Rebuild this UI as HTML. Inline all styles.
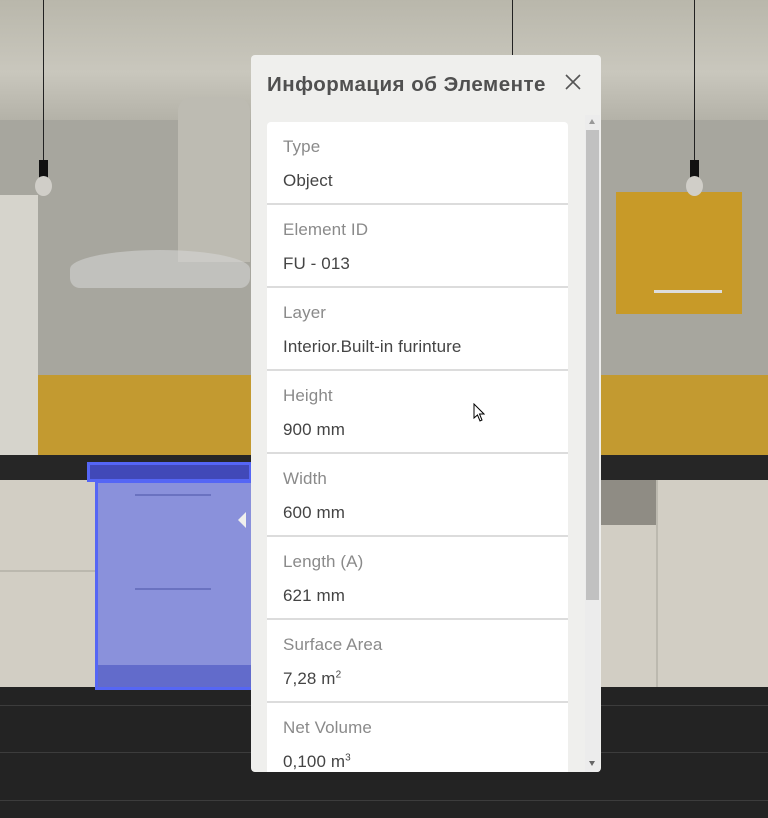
<!DOCTYPE html>
<html><head><meta charset="utf-8"><style>
*{margin:0;padding:0;box-sizing:border-box}
body{width:768px;height:818px;overflow:hidden;position:relative;font-family:"Liberation Sans",sans-serif;background:#bfbcb2}
.a{position:absolute}
.row{height:83px;border-bottom:2px solid #dcdcdc;padding-left:16px;position:relative}
.lb{position:absolute;left:16px;top:15px;font-size:17px;color:#8a8a8a;letter-spacing:0.1px}
.vl{position:absolute;left:16px;top:49px;font-size:17px;color:#444;letter-spacing:0.1px}
sup{font-size:10px}
</style></head><body>
<div class="a" style="left:0;top:0;width:768px;height:120px;background:linear-gradient(#b9b7ab,#c9c7bd 60%,#b4b2a8)"></div>
<div class="a" style="left:0;top:120px;width:768px;height:255px;background:#a7a69e"></div>
<div class="a" style="left:0;top:195px;width:38px;height:280px;background:#d6d4cc"></div>
<div class="a" style="left:38px;top:375px;width:730px;height:80px;background:#c39a30"></div>
<div class="a" style="left:0;top:455px;width:768px;height:25px;background:#262626"></div>
<div class="a" style="left:0;top:480px;width:768px;height:207px;background:#d2cec4"></div>
<div class="a" style="left:0;top:570px;width:95px;height:2px;background:#bbb8ae"></div>
<div class="a" style="left:656px;top:480px;width:2px;height:207px;background:#bcb9af"></div>
<div class="a" style="left:600px;top:480px;width:56px;height:45px;background:#8f8c84"></div>
<div class="a" style="left:0;top:687px;width:768px;height:131px;background:#232323"></div>
<div class="a" style="left:0;top:705px;width:768px;height:1px;background:#3c3c3c"></div>
<div class="a" style="left:0;top:752px;width:768px;height:1px;background:#3c3c3c"></div>
<div class="a" style="left:0;top:800px;width:768px;height:1px;background:#3c3c3c"></div>
<div class="a" style="left:178px;top:97px;width:72px;height:165px;background:#bdbbb2;border-radius:14px 14px 0 0"></div>
<div class="a" style="left:70px;top:250px;width:180px;height:38px;background:rgba(215,215,215,.55);border-radius:50% 50% 10px 10px"></div>
<div class="a" style="left:616px;top:192px;width:126px;height:122px;background:#c89a28"></div>
<div class="a" style="left:654px;top:290px;width:68px;height:3px;background:#ddd"></div>
<div class="a" style="left:43px;top:0;width:1px;height:165px;background:#222"></div>
<div class="a" style="left:39px;top:160px;width:9px;height:18px;background:#111"></div>
<div class="a" style="left:35px;top:176px;width:17px;height:20px;background:#d0cec8;border-radius:50%"></div>
<div class="a" style="left:694px;top:0;width:1px;height:165px;background:#222"></div>
<div class="a" style="left:690px;top:160px;width:9px;height:18px;background:#111"></div>
<div class="a" style="left:686px;top:176px;width:17px;height:20px;background:#d0cec8;border-radius:50%"></div>
<div class="a" style="left:512px;top:0;width:1px;height:55px;background:#222"></div>
<div class="a" style="left:87px;top:462px;width:165px;height:20px;background:rgba(70,80,210,.85);border:3px solid #5566f5"></div>
<div class="a" style="left:95px;top:480px;width:157px;height:210px;background:rgba(120,130,225,.8);border:3px solid #5566f5;border-right:none"></div>
<div class="a" style="left:98px;top:665px;width:154px;height:22px;background:rgba(90,100,200,.85)"></div>
<div class="a" style="left:135px;top:494px;width:76px;height:2px;background:#6a72c0"></div>
<div class="a" style="left:135px;top:588px;width:76px;height:2px;background:#6a72c0"></div>
<div class="a" style="top:512px;width:0;height:0;border:8px solid transparent;border-right-color:#efefed;border-left:none;left:238px"></div>
<div class="a" style="left:251px;top:55px;width:350px;height:717px;background:#efefed;border-radius:4px;overflow:hidden">
<div class="a" style="left:16px;top:18px;font-size:20.5px;font-weight:bold;color:#505050;letter-spacing:0.5px">Информация об Элементе</div>
<svg class="a" style="left:314px;top:19px" width="16" height="16" viewBox="0 0 16 16"><path d="M1 1L15 15M15 1L1 15" stroke="#555" stroke-width="1.6"/></svg>
<div class="a" style="left:16px;top:67px;width:301px;height:660px;background:#fff;border-radius:4px 4px 0 0;overflow:hidden">
<div class="row"><div class="lb">Type</div><div class="vl">Object</div></div>
<div class="row"><div class="lb">Element ID</div><div class="vl">FU - 013</div></div>
<div class="row"><div class="lb">Layer</div><div class="vl">Interior.Built-in furinture</div></div>
<div class="row"><div class="lb">Height</div><div class="vl">900 mm</div></div>
<div class="row"><div class="lb">Width</div><div class="vl">600 mm</div></div>
<div class="row"><div class="lb">Length (A)</div><div class="vl">621 mm</div></div>
<div class="row"><div class="lb">Surface Area</div><div class="vl">7,28 m<sup>2</sup></div></div>
<div class="row"><div class="lb">Net Volume</div><div class="vl">0,100 m<sup>3</sup></div></div>
</div>
<div class="a" style="left:334px;top:60px;width:15px;height:657px;background:#ececec"></div>
<div class="a" style="left:335px;top:75px;width:13px;height:470px;background:#c1c1c1"></div>
<div class="a" style="left:338px;top:64px;width:0;height:0;border:3.5px solid transparent;border-bottom:5px solid #999;border-top:none"></div>
<div class="a" style="left:338px;top:706px;width:0;height:0;border:3.5px solid transparent;border-top:5px solid #666;border-bottom:none"></div>
</div>
<svg class="a" style="left:473px;top:403px" width="12" height="19" viewBox="0 0 12 19"><path d="M1 1L1 15L4.5 12L7 18L9 17L6.5 11L11 11Z" fill="#fff" stroke="#000" stroke-width="1"/></svg>
</body></html>
